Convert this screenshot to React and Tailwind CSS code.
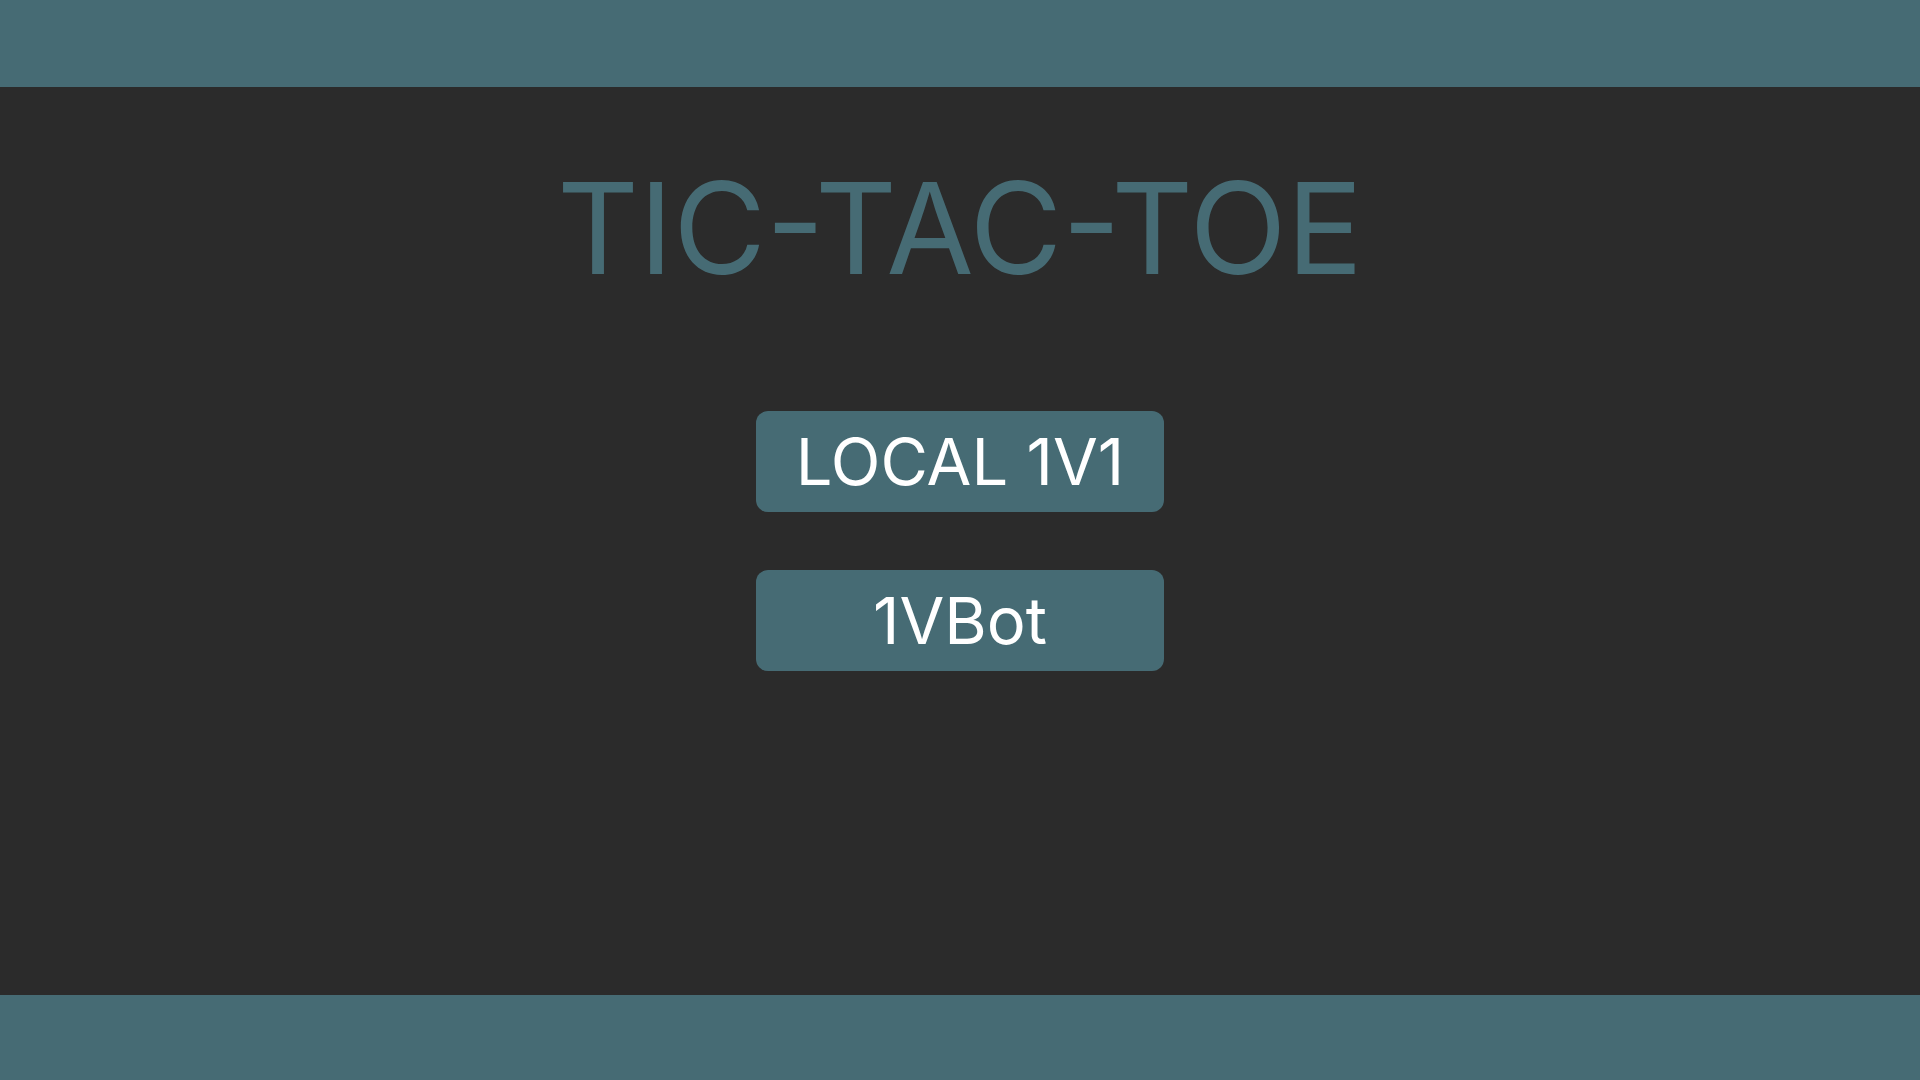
export default function App() {
    return (
        <div
            className="flex flex-col h-screen bg-[#2b2b2b]"
            style={{ fontFamily: 'Inter, "Noto Sans", sans-serif' }}
        >
            <header className="h-[87px] shrink-0 bg-[#466b74]" />
            <main className="flex-1 flex flex-col items-center">
                <h1 className="mt-[78px] text-[127px] leading-none font-normal text-[#466b74]">
                    TIC-TAC-TOE
                </h1>
                <div className="mt-[119px] flex flex-col gap-[58px]">
                    <button className="w-[408px] h-[101px] flex items-center justify-center rounded-xl bg-[#466b74] text-white text-[65px] leading-none">
                        LOCAL 1V1
                    </button>
                    <button className="w-[408px] h-[101px] flex items-center justify-center rounded-xl bg-[#466b74] text-white text-[65px] leading-none">
                        1VBot
                    </button>
                </div>
            </main>
            <footer className="h-[85px] shrink-0 bg-[#466b74]" />
        </div>
    );
}
